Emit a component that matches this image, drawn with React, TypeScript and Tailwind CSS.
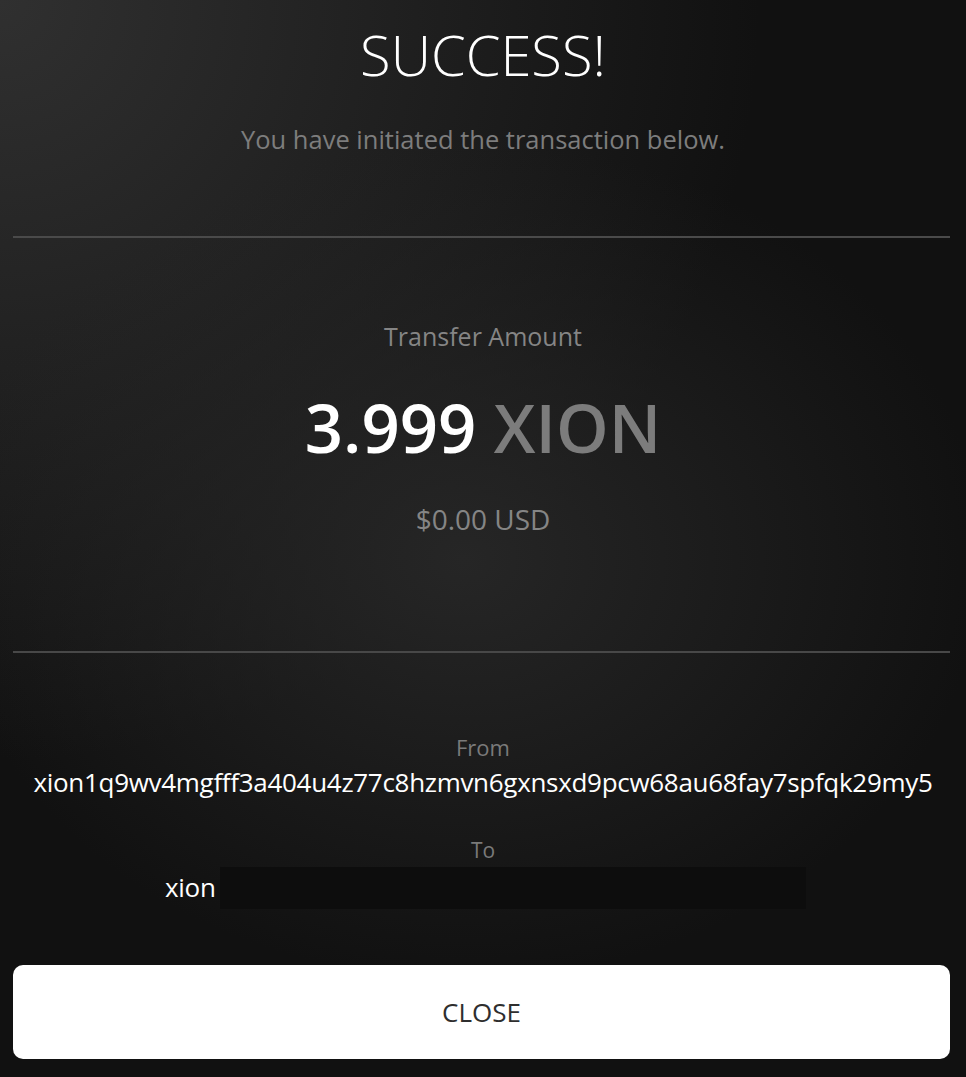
export default function App() {
  return (
    <div
      className="flex h-[1077px] w-full flex-col overflow-hidden bg-[#111111] bg-[radial-gradient(ellipse_520px_420px_at_48%_52%,rgba(38,38,38,1)_0%,rgba(38,38,38,0)_100%),radial-gradient(circle_760px_at_0%_0%,rgba(48,48,48,1)_0%,rgba(48,48,48,0)_100%)] text-center"
      style={{ fontFamily: '"Open Sans", "Noto Sans", sans-serif' }}
    >
      <h1 className="mt-[19px] text-[56px] font-light leading-[70px] text-white">SUCCESS!</h1>
      <p className="mt-[34px] text-[25.5px] leading-[32px] text-[#7d7d7d]">
        You have initiated the transaction below.
      </p>

      <div className="ml-[13px] mr-[16px] mt-[81px] h-[2px] bg-[#4a4a4a]" />

      <div className="flex flex-col items-center">
        <p className="mt-[82px] text-[25px] leading-[32px] text-[#858585]">Transfer Amount</p>
        <p className="mt-[37px] text-[67px] font-semibold leading-[76px]">
          <span className="text-white">3.999</span> <span className="text-[#7c7c7c]">XION</span>
        </p>
        <p className="mt-[38px] text-[28px] leading-[32px] text-[#858585]">$0.00 USD</p>
      </div>

      <div className="ml-[13px] mr-[16px] mt-[116px] h-[2px] bg-[#484848]" />

      <div className="flex flex-col items-center">
        <p className="mt-[80px] text-[22px] leading-[28px] text-[#7a7a7a]">From</p>
        <p className="mt-[5px] whitespace-nowrap text-[26px] leading-[32px] tracking-[-0.3px] text-white">
          xion1q9wv4mgfff3a404u4z77c8hzmvn6gxnsxd9pcw68au68fay7spfqk29my5
        </p>
        <p className="mt-[38px] text-[21px] leading-[28px] text-[#7a7a7a]">To</p>
        <div className="flex w-full items-center pl-[165px]">
          <span className="text-[26px] leading-[32px] tracking-[-0.3px] text-white">xion</span>
          <div className="ml-[4px] mt-[3px] h-[42px] w-[586px] bg-[#0d0d0d]" />
        </div>
      </div>

      <button className="ml-[13px] mr-[16px] mt-[56px] flex h-[94px] items-center justify-center rounded-[10px] bg-white text-[26px] text-[#2e2e2e]">
        CLOSE
      </button>
    </div>
  );
}
